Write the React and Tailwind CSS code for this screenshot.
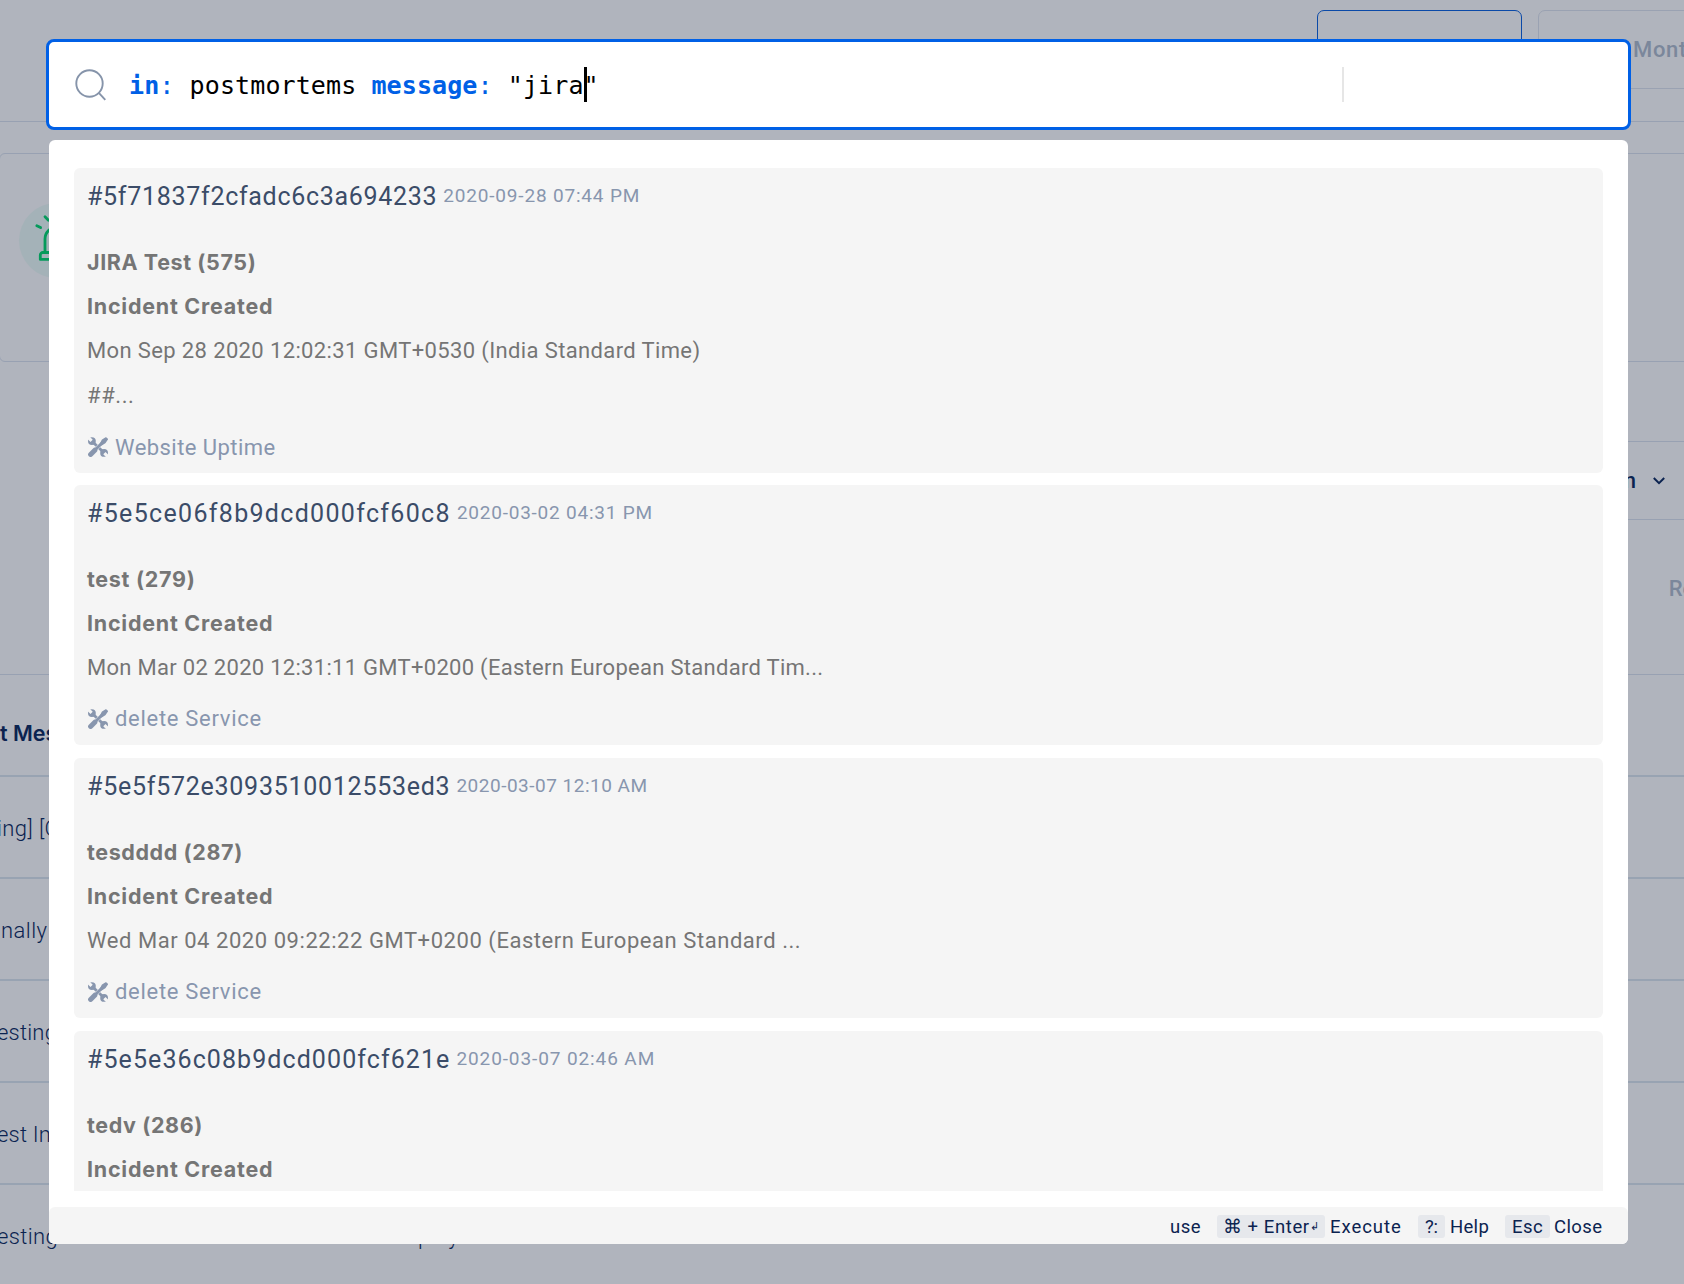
import React from "react";

const results = [
  {
    id: "#5f71837f2cfadc6c3a694233",
    idClass: "tracking-[0.7px]",
    date: "2020-09-28 07:44 PM",
    dateClass: "tracking-[0.82px]",
    title: "JIRA Test (575)",
    titleClass: "tracking-[0.6px]",
    lines: [
      { text: "Mon Sep 28 2020 12:02:31 GMT+0530 (India Standard Time)", cls: "tracking-[0.37px]" },
      { text: "##...", cls: "pt-px tracking-[0.6px]" },
    ],
    service: "Website Uptime",
    serviceClass: "tracking-[0.45px]",
    cardClass: "h-[305px] mb-3",
  },
  {
    id: "#5e5ce06f8b9dcd000fcf60c8",
    idClass: "tracking-[1.32px]",
    date: "2020-03-02 04:31 PM",
    dateClass: "tracking-[0.77px]",
    title: "test (279)",
    titleClass: "tracking-[0.7px]",
    lines: [
      {
        text: "Mon Mar 02 2020 12:31:11 GMT+0200 (Eastern European Standard Tim...",
        cls: "tracking-[0.29px]",
      },
    ],
    service: "delete Service",
    serviceClass: "tracking-[0.7px]",
    cardClass: "h-[260px] mb-[13px]",
  },
  {
    id: "#5e5f572e3093510012553ed3",
    idClass: "tracking-[0.74px]",
    date: "2020-03-07 12:10 AM",
    dateClass: "tracking-[0.5px]",
    title: "tesdddd (287)",
    titleClass: "tracking-[0.6px]",
    lines: [
      {
        text: "Wed Mar 04 2020 09:22:22 GMT+0200 (Eastern European Standard ...",
        cls: "tracking-[0.55px]",
      },
    ],
    service: "delete Service",
    serviceClass: "tracking-[0.7px]",
    cardClass: "h-[260px] mb-[13px]",
  },
  {
    id: "#5e5e36c08b9dcd000fcf621e",
    idClass: "tracking-[1.08px]",
    date: "2020-03-07 02:46 AM",
    dateClass: "tracking-[0.9px]",
    title: "tedv (286)",
    titleClass: "tracking-[0.6px]",
    lines: [],
    service: "delete Service",
    serviceClass: "tracking-[0.7px]",
    cardClass: "h-[260px]",
  },
];

const tableRows = [
  { text: "ing] [Critical]", cls: "-ml-[3px] tracking-[0.4px]" },
  { text: "nally", cls: "ml-[1px] tracking-[0.45px]" },
  { text: "esting", cls: "-ml-[3px] tracking-[0.2px]" },
  { text: "est Incident", cls: "-ml-[3px] tracking-[0.2px]" },
];

function SearchIcon() {
  return (
    <svg className="h-8 w-8 shrink-0" viewBox="0 0 32 32" fill="none" stroke="#8694aa" strokeWidth="1.9">
      <circle cx="14.5" cy="14.5" r="13.2" />
      <path d="M23.8 23.8 30.3 30.8" />
    </svg>
  );
}

function ToolsIcon() {
  return (
    <svg className="ml-px h-5 w-5 shrink-0" viewBox="0 0 20 20" fill="none">
      <path d="M4 4.2 16 15.8" stroke="#8896ae" strokeWidth="2.8" />
      <circle cx="3.9" cy="4.1" r="3.9" fill="#8896ae" />
      <circle cx="16.1" cy="15.9" r="3.9" fill="#8896ae" />
      <path d="M-0.5 -0.3 3.6 3.8M20.5 20.3 16.4 16.2" stroke="#f5f5f5" strokeWidth="3.2" />
      <path d="M4 16 16 4" stroke="#f5f5f5" strokeWidth="3.6" />
      <path d="M4 16 17 3" stroke="#8896ae" strokeWidth="3" />
      <path d="M2.6 17.4 6.8 13.2" stroke="#8896ae" strokeWidth="5" strokeLinecap="round" />
      <path
        d="M12.4 7 14.4 3.2 18 0.9 19.4 2.2 17 5.6 13.4 7.8z"
        fill="#8896ae"
        stroke="#8896ae"
        strokeWidth="1.4"
        strokeLinejoin="round"
      />
    </svg>
  );
}

function SirenIcon() {
  return (
    <svg
      className="h-11 w-11 overflow-visible"
      viewBox="0 0 44 44"
      fill="none"
      stroke="#059a5b"
      strokeWidth="2.8"
      strokeLinecap="round"
      strokeLinejoin="round"
    >
      <path d="M10 33V20a12 12 0 0 1 24 0v13" />
      <path d="M8 33.5H36a2.5 2.5 0 0 1 2.5 2.5V40.4H5.3V36A2.5 2.5 0 0 1 8 33.5z" />
      <path d="M1.8 6.8 5.6 8.6M10 -2.2 13.4 1.2M42.2 6.8 38.4 8.6M34 -2.2 30.6 1.2" />
    </svg>
  );
}

function Key({ children, className }) {
  return (
    <kbd className={`flex h-[23px] items-center justify-center rounded-[3px] bg-[#e6e8ec] font-[inherit] ${className}`}>
      {children}
    </kbd>
  );
}

function ResultCard({ item }) {
  return (
    <article className={`shrink-0 overflow-hidden rounded-[6px] bg-[#f5f5f5] pl-[13px] ${item.cardClass}`}>
      <header className="flex h-[55px] items-center pt-[2px]">
        <span className={`text-[25px] text-[#3b4c68] ${item.idClass}`}>{item.id}</span>
        <time className={`ml-[6px] text-[19px] text-[#8896ae] ${item.dateClass}`}>{item.date}</time>
      </header>
      <div className="pt-[17px] text-[22px] leading-[44.3px] text-[#757575]">
        <p className={`font-['Inter',sans-serif] text-[21.5px] font-bold ${item.titleClass}`}>{item.title}</p>
        <p className="font-['Inter',sans-serif] text-[21.5px] font-bold tracking-[0.75px]">Incident Created</p>
        {item.lines.map((line) => (
          <p key={line.text} className={line.cls}>
            {line.text}
          </p>
        ))}
      </div>
      <footer className="flex h-[58px] items-center gap-[7px] text-[22px] text-[#8896ae]">
        <ToolsIcon />
        <span className={item.serviceClass}>{item.service}</span>
      </footer>
    </article>
  );
}

function Backdrop() {
  return (
    <div className="flex h-[1284px] w-[1684px] flex-col overflow-hidden text-[22px] whitespace-nowrap text-[#0b2350]">
      <div className="flex h-[122px] shrink-0 items-start justify-end border-b border-[#98a1b2] pt-[10px]">
        <div className="h-[79px] w-[205px] rounded-[7px] border border-[#0b4aa8]" />
        <div className="-mr-10 ml-4 h-[79px] w-[186px] shrink-0 rounded-[7px] border border-[#9aa2b2] pt-[22px] pl-[94px] leading-[34px] font-medium tracking-[0.7px] text-[#7b879b]">
          Month
        </div>
      </div>
      <div className="mt-[31px] -mr-3 -ml-px h-[209px] shrink-0 rounded-[6px] border border-[#98a1b2] pt-[49px] pl-[19px]">
        <div className="flex h-[75px] w-[75px] items-center justify-center rounded-full bg-[#a4b2b8]">
          <SirenIcon />
        </div>
      </div>
      <div className="mt-[79px] ml-[100px] flex h-[79px] shrink-0 items-center justify-end gap-[17px] border-y border-[#98a1b2] pr-[19px] font-medium">
        <span>Duration</span>
        <svg className="h-2 w-3" viewBox="0 0 12 8" fill="none" stroke="#0b2350" strokeWidth="2">
          <path d="M0.8 1 6 6.2 11.2 1" />
        </svg>
      </div>
      <div className="flex h-[155px] shrink-0 items-center justify-end border-b border-[#98a1b2] font-medium text-[#7b879b]">
        <span className="-mr-[61px] pb-[17px]">Refresh</span>
      </div>
      <div className="flex h-[102px] shrink-0 items-center border-b-2 border-[#98a3b2] pt-[17px] font-['Inter',sans-serif] text-[21.5px] font-semibold">
        <span>t Message</span>
      </div>
      {tableRows.map((row) => (
        <div key={row.text} className="flex h-[102px] shrink-0 items-center border-b-2 border-[#98a3b2] pt-[2px] font-light">
          <span className={row.cls}>{row.text}</span>
        </div>
      ))}
      <div className="flex h-[99px] shrink-0 items-center pt-[3px] font-light">
        <span className="-ml-[3px] w-[924px] tracking-[0.35px]">esting a document for a new test of the deployed</span>
        <span className="w-[399px]">delete Service</span>
        <span>Resolved</span>
      </div>
    </div>
  );
}

function SearchBar() {
  return (
    <div className="-mx-[3px] flex h-[91px] shrink-0 items-center rounded-[8px] border-[3px] border-[#0060e6] bg-white pr-[284px] pl-[26px]">
      <SearchIcon />
      <div className="ml-[22px] flex flex-1 items-center font-['DejaVu_Sans_Mono',monospace] text-[25px] leading-[35px] tracking-[0.1px] whitespace-pre text-black">
        <span className="pt-[2px] font-bold text-[#0060e6]">in</span>
        <span className="pt-[2px] text-[#0060e6]">:</span>
        <span className="pt-[2px]"> postmortems </span>
        <span className="pt-[2px] font-bold text-[#0060e6]">message</span>
        <span className="pt-[2px] text-[#0060e6]">:</span>
        <span className="pt-[2px]"> "jira</span>
        <span className="-mr-[3px] h-[35px] w-[3px] bg-black" />
        <span className="pt-[2px]">"</span>
      </div>
      <div className="h-[35px] w-[2px] bg-[#e6e6e6]" />
    </div>
  );
}

export default function App() {
  return (
    <div className="relative h-[1284px] w-[1684px] overflow-hidden bg-[#b0b4bd] font-['Roboto',sans-serif]">
      <Backdrop />
      <div className="absolute top-[39px] left-[49px] flex h-[1205px] w-[1579px] flex-col">
        <SearchBar />
        <section className="mt-[10px] flex min-h-0 flex-1 flex-col rounded-[6px] bg-white">
          <div className="mx-[25px] mt-7 mb-4 flex min-h-0 flex-1 flex-col overflow-hidden">
            {results.map((item) => (
              <ResultCard key={item.id} item={item} />
            ))}
          </div>
          <footer className="flex h-[37px] shrink-0 items-center justify-end rounded-[6px] bg-[#f5f5f5] pt-[2px] pr-[25px] text-[18.5px] text-[#0b2350]">
            <span className="w-[47px] pt-[2px] tracking-[0.5px]">use</span>
            <Key className="w-[108px] pt-[2px] tracking-[0.6px]">
              <span>⌘ + Enter</span>
              <span className="text-[11px]">↲</span>
            </Key>
            <span className="ml-[5px] w-[88px] pt-[2px] tracking-[0.95px]">Execute</span>
            <Key className="w-[27px] pt-[2px]">?:</Key>
            <span className="ml-[5px] w-[55px] pt-[2px] tracking-[0.3px]">Help</span>
            <Key className="w-[45px] pt-[2px] tracking-[0.4px]">Esc</Key>
            <span className="ml-[4px] w-[49px] pt-[2px] tracking-[0.4px]">Close</span>
          </footer>
        </section>
      </div>
    </div>
  );
}
